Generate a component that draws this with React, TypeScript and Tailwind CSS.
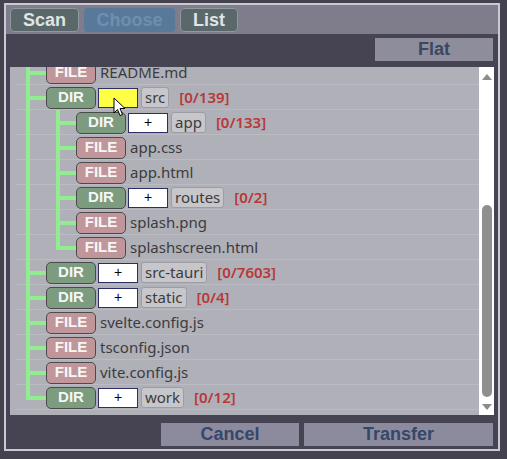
import React from 'react';

type Guide = 'pipe' | 'tee' | 'end';

type Entry = {
  kind: 'dir' | 'file';
  name: string;
  guides: Guide[];
  count?: string;
  hover?: boolean;
};

const entries: Entry[] = [
  { kind: 'file', name: 'README.md', guides: ['tee'] },
  { kind: 'dir', name: 'src', guides: ['tee'], count: '[0/139]', hover: true },
  { kind: 'dir', name: 'app', guides: ['pipe', 'tee'], count: '[0/133]' },
  { kind: 'file', name: 'app.css', guides: ['pipe', 'tee'] },
  { kind: 'file', name: 'app.html', guides: ['pipe', 'tee'] },
  { kind: 'dir', name: 'routes', guides: ['pipe', 'tee'], count: '[0/2]' },
  { kind: 'file', name: 'splash.png', guides: ['pipe', 'tee'] },
  { kind: 'file', name: 'splashscreen.html', guides: ['pipe', 'end'] },
  { kind: 'dir', name: 'src-tauri', guides: ['tee'], count: '[0/7603]' },
  { kind: 'dir', name: 'static', guides: ['tee'], count: '[0/4]' },
  { kind: 'file', name: 'svelte.config.js', guides: ['tee'] },
  { kind: 'file', name: 'tsconfig.json', guides: ['tee'] },
  { kind: 'file', name: 'vite.config.js', guides: ['tee'] },
  { kind: 'dir', name: 'work', guides: ['end'], count: '[0/12]' },
];

const sans = "font-['Liberation_Sans',Arial,sans-serif]";
const noto = "font-['Noto_Sans','Open_Sans',sans-serif]";

function GuideCell({ guide }: { guide: Guide }) {
  return (
    <div className="relative w-[30px] h-full shrink-0">
      {guide === 'end' ? (
        <span className="absolute left-[10px] top-0 h-[15px] w-[4px] bg-[#90ee90]" />
      ) : (
        <span className="absolute left-[10px] top-0 bottom-0 w-[4px] bg-[#90ee90]" />
      )}
      {guide !== 'pipe' && <span className="absolute left-[10px] right-0 top-[11px] h-[4px] bg-[#90ee90]" />}
    </div>
  );
}

function Cursor() {
  return (
    <svg className="absolute left-[14px] top-[8px]" width="13" height="20" viewBox="0 0 13 20">
      <path d="M1 1 L1 16 L4.5 12.5 L7 18.5 L9.5 17.5 L7 11.5 L12 11.5 Z" fill="#ffffff" stroke="#000000" strokeWidth="1" strokeLinejoin="round" />
    </svg>
  );
}

function Row({ entry }: { entry: Entry }) {
  const isDir = entry.kind === 'dir';
  return (
    <div className="flex items-center h-[25px] shadow-[inset_0_-1px_0_#bbbbc3]">
      {entry.guides.map((g, i) => (
        <GuideCell key={i} guide={g} />
      ))}
      <div
        className={`${sans} w-[50px] h-[22px] shrink-0 flex items-center justify-center rounded-[5px] border border-[#4a4a4a] text-[15px] font-bold text-[#f6f6f6] ${
          isDir ? 'bg-[#7c9b7f]' : 'bg-[#c1969a]'
        }`}
      >
        {isDir ? 'DIR' : 'FILE'}
      </div>
      {isDir ? (
        <>
          <div
            className={`relative ml-[2px] w-[40px] h-[20px] shrink-0 flex items-center justify-center border border-[#2c2f66] text-[14px] text-black ${sans} ${
              entry.hover ? 'bg-[#ffff44]' : 'bg-white'
            }`}
          >
            {entry.hover ? null : '+'}
            {entry.hover && <Cursor />}
          </div>
          <div className={`${noto} ml-[3px] h-[21px] px-[3px] flex items-center rounded-[3px] border border-[#9d9da3] bg-[#c6c6cb] text-[15px] text-[#3c3c3c]`}>
            {entry.name}
          </div>
          <span className={`${noto} ml-[10px] text-[15px] font-semibold text-[#b83838]`}>{entry.count}</span>
        </>
      ) : (
        <span className={`${noto} ml-[4px] text-[15px] text-[#3c3c3c]`}>{entry.name}</span>
      )}
    </div>
  );
}

function Scrollbar() {
  return (
    <div className="w-[15px] shrink-0 bg-white flex flex-col items-center pt-[7px]">
      <div className="w-0 h-0 border-l-[5px] border-r-[5px] border-b-[6px] border-l-transparent border-r-transparent border-b-[#8c8c8c]" />
      <div className="mt-[125px] w-[10px] h-[192px] rounded-[5px] bg-[#8f8f8f]" />
      <div className="mt-[7px] w-0 h-0 border-l-[5px] border-r-[5px] border-t-[6px] border-l-transparent border-r-transparent border-t-[#8c8c8c]" />
    </div>
  );
}

export default function App() {
  const tab = `${sans} h-[24px] rounded-[4px] text-[18px] font-bold flex items-center justify-center`;
  const action = `${sans} h-[23px] bg-[#8c8b9d] text-[18px] font-bold text-[#35476a] flex items-center justify-center`;

  return (
    <div className="w-[507px] h-[459px] bg-[#44434d] pt-[3px] pl-[4px] overflow-hidden">
      <div className="w-[496px] h-[448px] border-2 border-[#c9c8d4] bg-[#464452] flex flex-col">
        {/* tab strip */}
        <div className="h-[29px] bg-[#7f7d8b] flex items-start gap-[5px] pl-[4px] pt-[3px]">
          <button className={`${tab} w-[69px] bg-[#5a686c] border border-[#8e9a9c] text-[#dfe5e5]`}>Scan</button>
          <button className={`${tab} w-[91px] bg-[#59799a] text-[#6f8faf]`}>Choose</button>
          <button className={`${tab} w-[58px] bg-[#5a686c] border border-[#8e9a9c] text-[#dfe5e5]`}>List</button>
        </div>

        <div className="flex justify-end pr-[5px] mt-[4px]">
          <button className={`${sans} w-[118px] h-[23px] bg-[#8e8d9b] text-[18px] font-bold text-[#3a4862] flex items-center justify-center`}>
            Flat
          </button>
        </div>

        {/* file tree, scrolled a few pixels past the top */}
        <div className="mx-[4px] mt-[6px] h-[348px] flex bg-[#b0b0b8]">
          <div className="flex-1 overflow-hidden pl-[6px]">
            <div className="-mt-[7px]">
              {entries.map((e) => (
                <Row key={e.name} entry={e} />
              ))}
            </div>
          </div>
          <Scrollbar />
        </div>

        <div className="flex justify-end gap-[5px] pr-[5px] mt-[8px]">
          <button className={`${action} w-[138px]`}>Cancel</button>
          <button className={`${action} w-[189px]`}>Transfer</button>
        </div>
      </div>
    </div>
  );
}
